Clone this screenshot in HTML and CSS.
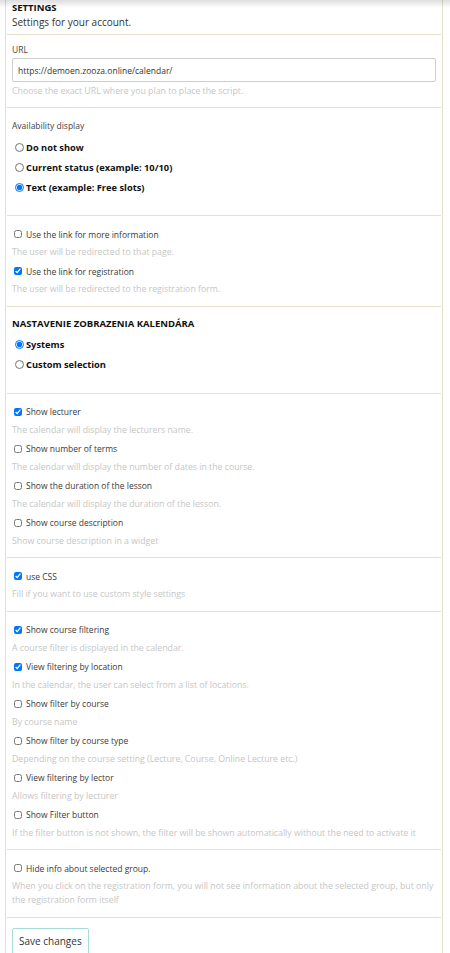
FILE: index.html
```html
<!DOCTYPE html>
<html lang="en">
<head>
    <meta charset="UTF-8">
    <meta name="viewport" content="width=device-width, initial-scale=1.0">
    <title>Settings</title>
    <link rel="stylesheet" href="styles.css">
</head>
<body>
    <div class="top_shadow"></div>

    <div class="card">
        <div class="section head">
            <div class="title">SETTINGS</div>
            <div class="subtitle">Settings for your account.</div>
        </div>

        <div class="section url">
            <div class="field_label">URL</div>
            <input class="text_input" type="text" value="https://demoen.zooza.online/calendar/">
            <div class="hint">Choose the exact URL where you plan to place the script.</div>
        </div>

        <div class="section radios">
            <div class="field_label">Availability display</div>
            <label class="radio"><input type="radio" name="avail"> Do not show</label>
            <label class="radio"><input type="radio" name="avail"> Current status (example: 10/10)</label>
            <label class="radio"><input type="radio" name="avail" checked> Text (example: Free slots)</label>
        </div>

        <div class="section">
            <div class="item">
                <label class="check"><input type="checkbox"> Use the link for more information</label>
                <div class="hint">The user will be redirected to that page.</div>
            </div>
            <div class="item">
                <label class="check"><input type="checkbox" checked> Use the link for registration</label>
                <div class="hint">The user will be redirected to the registration form.</div>
            </div>
        </div>

        <div class="section radios">
            <div class="title">NASTAVENIE ZOBRAZENIA KALENDÁRA</div>
            <label class="radio"><input type="radio" name="view" checked> Systems</label>
            <label class="radio"><input type="radio" name="view"> Custom selection</label>
        </div>

        <div class="section">
            <div class="item">
                <label class="check"><input type="checkbox" checked> Show lecturer</label>
                <div class="hint">The calendar will display the lecturers name.</div>
            </div>
            <div class="item">
                <label class="check"><input type="checkbox"> Show number of terms</label>
                <div class="hint">The calendar will display the number of dates in the course.</div>
            </div>
            <div class="item">
                <label class="check"><input type="checkbox"> Show the duration of the lesson</label>
                <div class="hint">The calendar will display the duration of the lesson.</div>
            </div>
            <div class="item">
                <label class="check"><input type="checkbox"> Show course description</label>
                <div class="hint">Show course description in a widget</div>
            </div>
        </div>

        <div class="section">
            <div class="item">
                <label class="check"><input type="checkbox" checked> use CSS</label>
                <div class="hint">Fill if you want to use custom style settings</div>
            </div>
        </div>

        <div class="section">
            <div class="item">
                <label class="check"><input type="checkbox" checked> Show course filtering</label>
                <div class="hint">A course filter is displayed in the calendar.</div>
            </div>
            <div class="item">
                <label class="check"><input type="checkbox" checked> View filtering by location</label>
                <div class="hint">In the calendar, the user can select from a list of locations.</div>
            </div>
            <div class="item">
                <label class="check"><input type="checkbox"> Show filter by course</label>
                <div class="hint">By course name</div>
            </div>
            <div class="item">
                <label class="check"><input type="checkbox"> Show filter by course type</label>
                <div class="hint">Depending on the course setting (Lecture, Course, Online Lecture etc.)</div>
            </div>
            <div class="item">
                <label class="check"><input type="checkbox"> View filtering by lector</label>
                <div class="hint">Allows filtering by lecturer</div>
            </div>
            <div class="item">
                <label class="check"><input type="checkbox"> Show Filter button</label>
                <div class="hint">If the filter button is not shown, the filter will be shown automatically without the need to activate it</div>
            </div>
        </div>

        <div class="section">
            <div class="item">
                <label class="check"><input type="checkbox"> Hide info about selected group.</label>
                <div class="hint">When you click on the registration form, you will not see information about the selected group, but only the registration form itself</div>
            </div>
        </div>

        <div class="section last">
            <button class="save">Save changes</button>
        </div>
    </div>
</body>
</html>
```

FILE: styles.css
```css
body{
    margin: 0;
    background-color: #ffffff;
    font-family: "Open Sans", Lato, sans-serif;
    color: #333333;
    overflow: hidden;
}
.top_shadow{
    position: fixed;
    top: 0;
    left: 0;
    right: 0;
    height: 8px;
    background: linear-gradient(to bottom, rgba(0, 0, 0, 0.13), rgba(0, 0, 0, 0));
    z-index: 2;
}
.card{
    margin: -12px 7px 0 5px;
    border: 1.5px solid #e4e2cd;
    padding: 0 1px;
    background-color: #ffffff;
}
.section{
    border-bottom: 1px solid #e4e2cd;
    padding: 10px 5px 5.5px;
}
.section.head{
    padding: 12px 5px 5px;
}
.section.url{
    padding: 8px 5px 9px;
}
.section.radios{
    padding: 10px 5px 18px;
}
.section.last{
    border-bottom: 0;
    padding: 10px 5px 20px;
}
.title{
    font-size: 9.5px;
    line-height: 14px;
    font-weight: bold;
    color: #111111;
}
.subtitle{
    font-size: 10px;
    line-height: 14px;
    color: #333333;
}
.field_label{
    font-size: 8.5px;
    line-height: 14px;
    color: #444444;
    margin-bottom: 1px;
}
.radios .field_label,
.radios .title{
    margin-bottom: 4px;
}
.radios .field_label{
    margin-top: 1px;
}
.text_input{
    display: block;
    box-sizing: border-box;
    width: 100%;
    height: 24px;
    margin: 0 0 2px;
    padding: 0 5px;
    border: 1px solid #cfcfcf;
    border-radius: 2px;
    font-family: inherit;
    font-size: 8.5px;
    color: #333333;
    outline: none;
}
.hint{
    font-size: 8.75px;
    line-height: 14px;
    color: #c6c6c6;
}
.radio{
    display: flex;
    align-items: center;
    height: 20px;
    font-size: 9.3px;
    font-weight: bold;
    color: #111111;
}
.radio input{
    width: 9px;
    height: 9px;
    margin: 0 2px 0 3px;
}
.item{
    margin-bottom: 4px;
}
.check{
    display: flex;
    align-items: center;
    height: 16px;
    margin-bottom: 3px;
    font-size: 8.5px;
    color: #3a3a3a;
}
.check input{
    width: 8px;
    height: 8px;
    margin: 0 4px 0 2px;
}
.save{
    height: 27px;
    padding: 0 6px;
    background-color: #ffffff;
    border: 1px solid #a9dcd6;
    border-radius: 2px;
    font-family: inherit;
    font-size: 10px;
    color: #333333;
}
```
